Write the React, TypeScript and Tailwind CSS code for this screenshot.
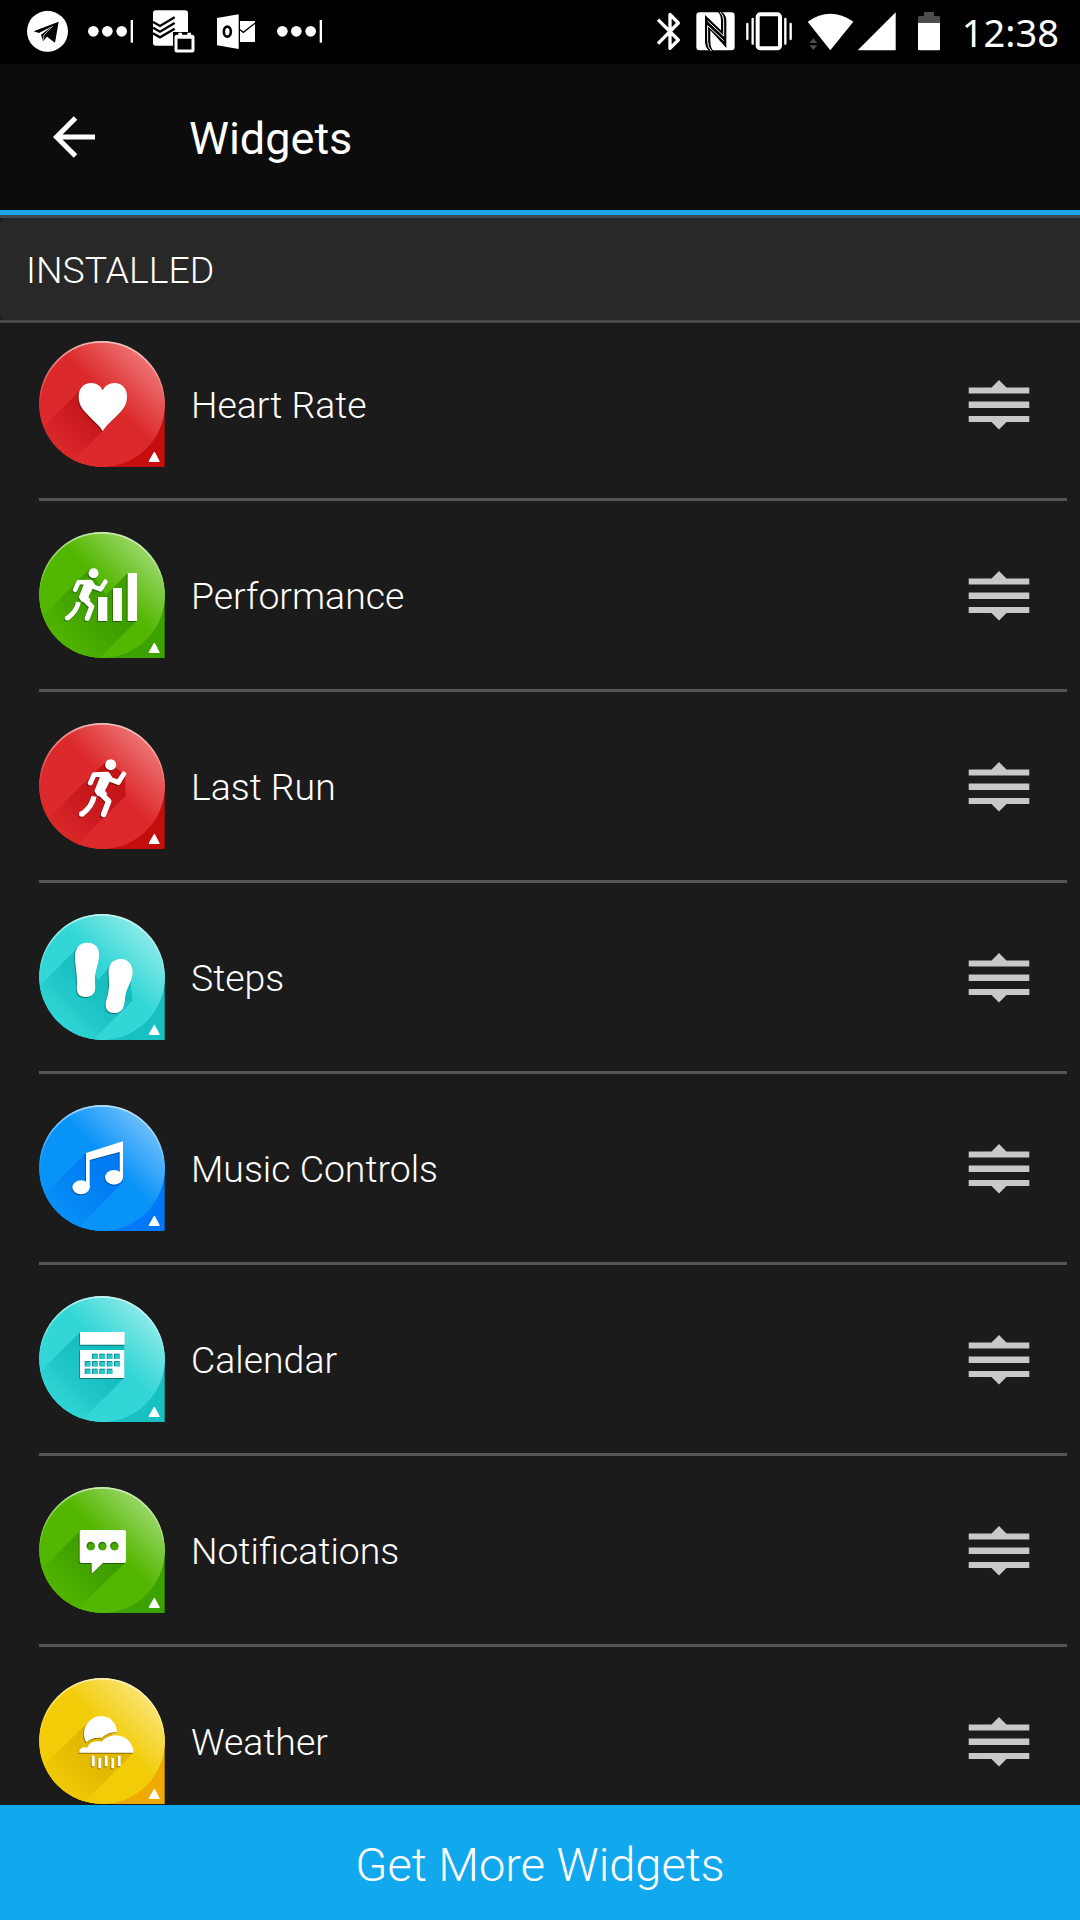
import type { ReactNode } from "react";

type Tone = {
  id: string;
  base: string;
  light: string;
  corner: string;
  shade: string;
};

type Widget = {
  name: string;
  tone: Tone;
  glyph: ReactNode;
  shadow: string;
};

const red: Tone = { id: "red", base: "#dc2a2c", light: "#f07a7a", corner: "#c60d0d", shade: "#c41418" };
const green: Tone = { id: "green", base: "#53b600", light: "#a0db72", corner: "#3ca200", shade: "#3c9c00" };
const teal: Tone = { id: "teal", base: "#32d6d6", light: "#92ecea", corner: "#17c0c2", shade: "#14bcbe" };
const blue: Tone = { id: "blue", base: "#0893f8", light: "#78c2fc", corner: "#0078f8", shade: "#007af2" };
const yellow: Tone = { id: "yellow", base: "#f2cc06", light: "#fae67c", corner: "#eeaa00", shade: "#dfb400" };

const tones = [red, green, teal, blue, yellow];

function Runner() {
  return (
    <g fill="none" stroke="#fff" strokeLinecap="round" strokeLinejoin="round">
      <circle cx="215" cy="125" r="16.5" fill="#fff" stroke="none" />
      <path d="M154 180 L165 155 L205 154 L216 170 L238 178 L254 153" strokeWidth="15" />
      <path d="M177 150 L207 148 L216 168 L198 203 L206 214 L176 220 L166 204 L182 164 Z" fill="#fff" stroke="none" />
      <path d="M177 203 L209 235 L194 274" strokeWidth="17" />
      <path d="M165 220 Q160 250 128 274" strokeWidth="16" strokeLinecap="butt" />
      <circle cx="128" cy="273" r="8" fill="#fff" stroke="none" />
    </g>
  );
}

const calendarCells = [
  [159, 173], [181, 173], [203, 173], [225, 173],
  [137, 195], [159, 195], [181, 195], [203, 195], [225, 195],
  [137, 218], [159, 218], [181, 218], [203, 218],
];

const widgets: Widget[] = [
  {
    name: "Heart Rate",
    tone: red,
    shadow: "M124 147 L0 270 L40 420 L191 271 Z",
    glyph: (
      <path
        fill="#fff"
        d="M191 271 C181 252 162 240 139 214 C124 198 119 184 119 166 C119 142 135 126 156 126 C173 126 185 135 191 148 C198 135 210 126 227 126 C248 126 264 142 264 166 C264 184 259 198 244 214 C221 238 202 252 191 271 Z"
      />
    ),
  },
  {
    name: "Performance",
    tone: green,
    shadow: "M151 112 L0 263 L100 460 L294 266 L294 123 L266 123 L200 190 Z",
    glyph: (
      <>
        <g transform="translate(-32 10) scale(.91)">
          <Runner />
        </g>
        <path fill="#fff" d="M177 195h28v72h-28zM222 168h27v99h-27zM266 123h28v144h-28z" />
      </>
    ),
  },
  {
    name: "Last Run",
    tone: red,
    shadow: "M203 113 L0 312 L30 450 L260 218 L258 155 Z",
    glyph: <Runner />,
  },
  {
    name: "Steps",
    tone: teal,
    shadow: "M118 98 L0 218 L80 460 L280 260 L270 140 L210 160 L178 198 Z",
    glyph: (
      <path
        fill="#fff"
        d="M146 86 C172 86 182 106 180 128 C178 158 166 170 168 208 C172 236 162 249 141 249 C119 249 111 238 114 210 C115 178 108 160 108 130 C107 104 120 86 146 86 Z M245 135 C269 134 282 155 281 178 C278 208 261 222 258 254 C256 286 246 297 226 297 C204 298 195 280 202 258 C213 222 210 208 209 182 C206 152 220 136 245 135 Z"
      />
    ),
  },
  {
    name: "Music Controls",
    tone: blue,
    shadow: "M142 144 L0 284 L40 448 L252 232 L252 120 Z",
    glyph: (
      <g fill="#fff">
        <path d="M141 144 L252 109 V218 H242 V141 L152 165 V248 H141 Z" />
        <ellipse cx="126" cy="247" rx="26" ry="21" />
        <ellipse cx="225" cy="217" rx="27" ry="22" />
      </g>
    ),
  },
  {
    name: "Calendar",
    tone: teal,
    shadow: "M123 109 L0 230 L60 440 L256 246 L256 109 Z",
    glyph: (
      <>
        <path fill="#fff" d="M123 108h134v38H123zM123 162h133v84H123z" />
        {calendarCells.map(([x, y]) => (
          <g key={`${x}-${y}`}>
            <rect x={x} y={y} width="17" height="16" fill="#128f92" />
            <rect x={x + 3} y={y + 3} width="14" height="13" fill="#2cc9ca" />
          </g>
        ))}
      </>
    ),
  },
  {
    name: "Notifications",
    tone: green,
    shadow: "M124 131 L0 254 L40 440 L260 226 L260 131 Z",
    glyph: (
      <>
        <path
          fill="#fff"
          d="M128 129 H255 Q261 129 261 135 V222 Q261 228 255 228 H192 L158 260 V228 H128 Q122 228 122 222 V135 Q122 129 128 129 Z"
        />
        {[155, 190, 226].map((cx) => (
          <g key={cx}>
            <circle cx={cx} cy="177" r="12.5" fill="#2d7800" />
            <circle cx={cx + 1.5} cy="179" r="10.5" fill="#48aa02" />
          </g>
        ))}
      </>
    ),
  },
  {
    name: "Weather",
    tone: yellow,
    shadow: "M148 132 L0 276 L60 450 L283 224 L200 150 Z",
    glyph: (
      <g fill="#fff">
        <path d="M142 193 C130 175 133 146 151 129 C169 111 199 109 217 125 C228 135 234 148 234 162 C215 162 200 168 187 180 C170 178 156 182 142 193 Z" />
        <path d="M120 224 C121 211 131 205 144 209 C151 192 168 187 188 191 C205 171 232 166 255 178 C273 187 283 205 284 224 Z" />
        <path d="M158 233h9v32h-9zM178 240h8v31h-8zM197 233h9v32h-9zM217 240h8v31h-8zM236 233h9v32h-9z" />
      </g>
    ),
  },
];

/* Gradients and clip shared by all of the badges */
function BadgeDefs() {
  return (
    <svg width="0" height="0" className="absolute">
      <defs>
        <clipPath id="badge-circle">
          <circle cx="189" cy="189" r="189" />
        </clipPath>
        <linearGradient id="badge-rim" x1="0" y1="0" x2="0" y2="1">
          <stop offset="0" stopColor="#fff" stopOpacity=".6" />
          <stop offset=".5" stopColor="#fff" stopOpacity="0" />
        </linearGradient>
        {tones.map((tone) => (
          <linearGradient key={tone.id} id={`face-${tone.id}`} x1=".88" y1=".12" x2=".22" y2=".78">
            <stop offset="0" stopColor={tone.light} />
            <stop offset=".5" stopColor={tone.base} stopOpacity=".96" />
            <stop offset="1" stopColor={tone.base} />
          </linearGradient>
        ))}
        {tones.map((tone) => (
          <linearGradient
            key={tone.id}
            id={`shade-${tone.id}`}
            gradientUnits="userSpaceOnUse"
            x1="210"
            y1="170"
            x2="60"
            y2="320"
          >
            <stop offset="0" stopColor={tone.shade} />
            <stop offset=".4" stopColor={tone.shade} stopOpacity=".8" />
            <stop offset="1" stopColor={tone.shade} stopOpacity=".1" />
          </linearGradient>
        ))}
      </defs>
    </svg>
  );
}

function Badge({ tone, glyph, shadow }: Omit<Widget, "name">) {
  return (
    <svg viewBox="0 0 378 378" className="size-[126px] shrink-0">
      <path d="M189 189H377V378H189Z" fill={tone.corner} />
      <g clipPath="url(#badge-circle)">
        <circle cx="189" cy="189" r="189" fill={tone.base} />
        <circle cx="189" cy="189" r="189" fill={`url(#face-${tone.id})`} />
        <path d={shadow} fill={`url(#shade-${tone.id})`} />
      </g>
      <circle cx="189" cy="189" r="186.5" fill="none" stroke="url(#badge-rim)" strokeWidth="5" />
      <g className="drop-shadow-[-2px_3px_1px_rgba(0,0,0,0.4)]">{glyph}</g>
      <path d="M346 335L360 361H331Z" fill="#fff" stroke="#fff" strokeWidth="4" strokeLinejoin="round" />
    </svg>
  );
}

function DragHandle() {
  return (
    <svg viewBox="0 0 62 52" className="w-[62px] h-[52px]" fill="#c8c8c8">
      <path d="M.7 9.5H23.5L31 2L38.5 9.5H61.3V15.5H.7ZM.7 23.5H61.3V30H.7ZM.7 38H61.3V44H38.5L31 51.5L23.5 44H.7Z" />
    </svg>
  );
}

function MoreDots() {
  return (
    <svg viewBox="264 0 135 192" className="w-[45px] h-16" fill="#fff">
      <circle cx="280" cy="94" r="16" />
      <circle cx="322" cy="94" r="16" />
      <circle cx="365" cy="94" r="16" />
      <path d="M392 60h7v68h-7z" />
    </svg>
  );
}

function StatusBar() {
  return (
    <div className="flex h-16 items-center justify-between bg-black pl-[27px] pr-[21px]">
      <div className="flex items-center">
        {/* Telegram */}
        <svg viewBox="81 0 123 192" className="w-[41px] h-16">
          <circle cx="142.5" cy="94" r="61.5" fill="#fff" />
          <path d="M101 94L176 65L165 128L141 110L129 124L123 104L158 78L117 99Z" fill="#000" />
          <path d="M129 122L132 105L158 79" fill="none" stroke="#fff" strokeWidth="2" />
        </svg>
        <div className="ml-5">
          <MoreDots />
        </div>
        {/* Todoist with work badge */}
        <svg viewBox="459 0 126 192" className="ml-5 w-[42px] h-16">
          <rect x="459" y="31" width="105" height="106" rx="8" fill="#fff" />
          <g fill="none" stroke="#000" strokeWidth="7">
            <path d="M459 66L480 78L524 52M459 83L480 95L524 69M459 100L480 112L524 86" />
          </g>
          <path d="M519 96H590V160H519Z" fill="#000" />
          <rect x="528" y="109" width="51" height="44" rx="3" fill="#000" stroke="#fff" strokeWidth="9" />
          <path d="M535 98h11v10h-11zM562 98h11v10h-11zM528 105h51v11h-51z" fill="#fff" />
        </svg>
        {/* Outlook */}
        <svg viewBox="651 0 114 192" className="ml-[22px] w-[38px] h-16">
          <path d="M651 54L716 43V147L651 136Z" fill="#fff" />
          <ellipse cx="682" cy="95" rx="10.5" ry="15" fill="none" stroke="#000" strokeWidth="8" />
          <path d="M720 63H765V126H720Z" fill="#fff" />
          <path d="M718 88L730 97L766 69" fill="none" stroke="#000" strokeWidth="4" />
        </svg>
        <div className="ml-[22px]">
          <MoreDots />
        </div>
      </div>

      <div className="flex items-center">
        {/* Bluetooth */}
        <svg viewBox="48 0 75 192" className="w-[25px] h-16" fill="none" stroke="#fff" strokeWidth="10" strokeLinejoin="round">
          <path d="M54 59L115 120L90 145V43L115 69L54 131" />
        </svg>
        {/* NFC */}
        <svg viewBox="168 0 117 192" className="ml-[15px] w-[39px] h-16">
          <rect x="169" y="37" width="115" height="114" rx="10" fill="#fff" />
          <path
            d="M195 45L243 91V62Q243 46 234 36H245Q259 44 259 62V144L211 91V124Q211 142 220 153H208Q195 142 195 124Z"
            fill="#000"
          />
          <path d="M203 63L251 108V62Q251 46 240 36M251 122L203 77V124Q203 142 214 153" fill="none" stroke="#fff" strokeWidth="3" />
        </svg>
        {/* Vibrate */}
        <svg viewBox="315 0 144 192" className="ml-[10px] w-12 h-16" fill="none" stroke="#fff">
          <rect x="353" y="43" width="67" height="102" rx="8" strokeWidth="12" />
          <path d="M338 57V131M436 57V131M322 72V117M452 72V117" strokeWidth="7" strokeLinecap="round" />
        </svg>
        {/* Wifi */}
        <svg viewBox="501 0 141 192" className="ml-[14px] w-[47px] h-16">
          <path d="M503 65Q571 18 640 65L571 151Z" fill="#fff" />
          <path d="M508 129L520 115L532 129ZM508 136H532L520 150Z" fill="#4d4d4d" />
        </svg>
        {/* Signal */}
        <svg viewBox="651 0 117 192" className="ml-[3px] w-[39px] h-16">
          <path d="M653 151L767 37V151Z" fill="#fff" />
        </svg>
        {/* Battery */}
        <svg viewBox="834 0 66 192" className="ml-[22px] w-[22px] h-16">
          <path d="M852 36H882V48H896Q900 48 900 52V69H834V52Q834 48 838 48H852Z" fill="#4d4d4d" />
          <path d="M834 69H900V147Q900 151 896 151H838Q834 151 834 147Z" fill="#fff" />
        </svg>
        <span className="ml-[22px] font-['Noto_Sans',sans-serif] text-[38px] leading-none text-white">12:38</span>
      </div>
    </div>
  );
}

export default function App() {
  return (
    <div className="flex h-[1920px] w-[1080px] flex-col overflow-hidden bg-[#1b1b1b] font-[Roboto,sans-serif] text-white">
      <BadgeDefs />
      <StatusBar />

      {/* Title bar */}
      <header className="flex h-[151px] items-center border-b-[5px] border-[#18a4e8] bg-[#0c0c0c] pl-[53px]">
        <svg viewBox="0 0 42 42" className="mb-px size-[42px]" fill="none" stroke="#fff" strokeWidth="5">
          <path d="M22.5 2L3.5 21L22.5 40M3 21H42" />
        </svg>
        <h1 className="ml-[94px] pt-0.5 text-[45px] leading-none">Widgets</h1>
      </header>

      {/* Section heading */}
      <div className="h-[108px] border-t-[3px] border-b-[3px] border-t-[#3f4a50] border-b-[#484848]">
        <h2 className="flex h-[102px] items-center rounded-l-md bg-[#282828] pt-[3px] pl-[26px] text-[37.4px] font-light leading-none">
          INSTALLED
        </h2>
      </div>

      <main className="min-h-0 flex-1 overflow-hidden">
        <ul className="-mt-[13px] pl-[39px] pr-[13px]">
          {widgets.map(({ name, ...badge }) => (
            <li key={name} className="flex h-[191px] items-center border-b-[3px] border-[#555] pr-[37px]">
              <Badge {...badge} />
              <span className="ml-[26px] flex-1 pt-[3px] text-[37.4px] font-light leading-none">{name}</span>
              <DragHandle />
            </li>
          ))}
        </ul>
      </main>

      <button className="h-[115px] shrink-0 bg-[#12a8ee] pt-[3px] text-[47px] font-light leading-none">
        Get More Widgets
      </button>
    </div>
  );
}
